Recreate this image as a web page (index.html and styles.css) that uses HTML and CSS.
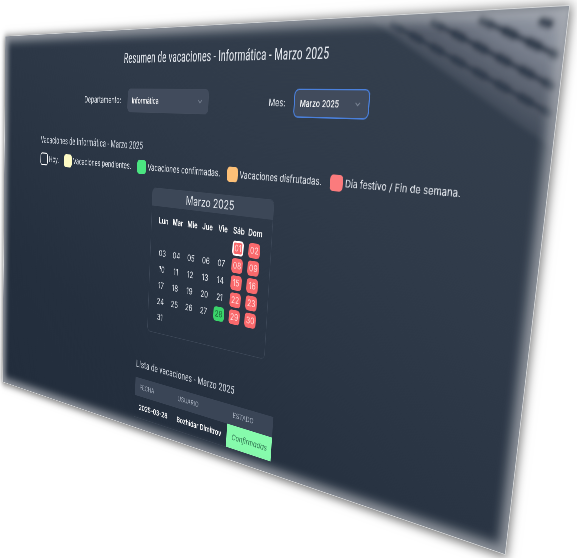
FILE: index.html
```html
<!DOCTYPE html>
<html lang="es">
<head>
<meta charset="utf-8">
<meta name="viewport" content="width=device-width, initial-scale=1">
<title>Resumen de vacaciones</title>
<link rel="stylesheet" href="styles.css">
</head>
<body>
<div class="stage">
<main class="screen" id="screen">
  <svg class="pattern" viewBox="0 0 360 180" aria-hidden="true">
    <defs>
      <linearGradient id="light" gradientUnits="userSpaceOnUse" x1="200" y1="85" x2="270" y2="-50">
        <stop offset="0" stop-color="#8a8e9c" stop-opacity="0.15"/>
        <stop offset="0.25" stop-color="#8a8e9c" stop-opacity="0.42"/>
        <stop offset="0.6" stop-color="#8f95a2" stop-opacity="0.85"/>
        <stop offset="1" stop-color="#a0a5b0" stop-opacity="1"/>
      </linearGradient>
      <filter id="soft" x="-10%" y="-10%" width="120%" height="120%"><feGaussianBlur stdDeviation="3"/></filter>
    </defs>
    <g filter="url(#soft)">
      <path d="M60 4 H360 V168 Z" fill="url(#light)"/>
      <g fill="none" stroke="#333e4d" stroke-width="13" stroke-linecap="round" stroke-dasharray="16 22">
        <path d="M166 12 L350 94"/>
        <path d="M240 12 L350 57"/>
        <path d="M100 12 L350 126"/>
        <path d="M326 17 L336 20"/>
      </g>
      <g fill="none" stroke="#333e4d" stroke-width="8">
        <path d="M166 12 L350 94"/>
        <path d="M240 12 L350 57"/>
        <path d="M100 12 L350 126"/>
      </g>
    </g>
  </svg>

  <h1 class="title">Resumen de vacaciones - Informática - Marzo 2025</h1>

  <form class="filters">
    <div class="field">
      <label for="dep">Departamento:</label>
      <span class="picker picker-wide">
        <select id="dep"><option>Informática</option></select>
        <svg viewBox="0 0 20 20" aria-hidden="true"><path d="M6 8l4 4 4-4"/></svg>
      </span>
    </div>
    <div class="field">
      <label for="mes">Mes:</label>
      <span class="picker picker-active">
        <select id="mes"><option>Marzo 2025</option></select>
        <svg viewBox="0 0 20 20" aria-hidden="true"><path d="M6 8l4 4 4-4"/></svg>
      </span>
    </div>
  </form>

  <section class="summary">
    <h2 class="heading">Vacaciones de Informática - Marzo 2025</h2>
    <ul class="legend">
      <li><i class="swatch today"></i>Hoy.</li>
      <li><i class="swatch pending"></i>Vacaciones pendientes.</li>
      <li><i class="swatch confirmed"></i>Vacaciones confirmadas.</li>
      <li><i class="swatch enjoyed"></i>Vacaciones disfrutadas.</li>
      <li><i class="swatch holiday"></i>Día festivo / Fin de semana.</li>
    </ul>
  </section>

  <section class="calendar">
    <h3>Marzo 2025</h3>
    <table class="days">
      <thead><tr><th>Lun</th><th>Mar</th><th>Mie</th><th>Jue</th><th>Vie</th><th>Sáb</th><th>Dom</th></tr></thead>
      <tbody>
        <tr><td></td><td></td><td></td><td></td><td></td><td><span class="off now">01</span></td><td><span class="off">02</span></td></tr>
        <tr><td>03</td><td>04</td><td>05</td><td>06</td><td>07</td><td><span class="off">08</span></td><td><span class="off">09</span></td></tr>
        <tr><td>10</td><td>11</td><td>12</td><td>13</td><td>14</td><td><span class="off">15</span></td><td><span class="off">16</span></td></tr>
        <tr><td>17</td><td>18</td><td>19</td><td>20</td><td>21</td><td><span class="off">22</span></td><td><span class="off">23</span></td></tr>
        <tr><td>24</td><td>25</td><td>26</td><td>27</td><td><span class="ok">28</span></td><td><span class="off">29</span></td><td><span class="off">30</span></td></tr>
        <tr><td>31</td><td></td><td></td><td></td><td></td><td></td><td></td></tr>
      </tbody>
    </table>
  </section>

  <section class="list">
    <h2 class="heading">Lista de vacaciones - Marzo 2025</h2>
    <table class="records">
      <thead><tr><th>Fecha</th><th>Usuario</th><th>Estado</th></tr></thead>
      <tbody><tr><td>2025-03-28</td><td>Bozhidar Dimitrov</td><td class="state">Confirmadas</td></tr></tbody>
    </table>
  </section>
</main>
</div>
<script src="tilt.js"></script>
</body>
</html>
```
FILE: styles.css
```css
* { box-sizing: border-box; }

html, body {
  margin: 0;
  height: 100%;
  background: #fff;
}

.stage { height: 100%; overflow: clip; }

.screen {
  position: relative;
  width: 1200px;
  min-height: 700px;
  padding: 33px 125px 0;
  transform-origin: 0 0;
  color: #e4e8ee;
  background: linear-gradient(205deg, #36414f 0%, #2f3a49 35%, #242f3e 75%, #222d3c 100%);
  box-shadow: 0 2px 14px 2px rgba(0, 0, 0, 0.55);
  font: 15px/24px Inter, "Liberation Sans", sans-serif;
}

/* soft bright rim along the edge of the screen */
.screen::after {
  content: "";
  position: absolute;
  inset: 0;
  border: 1px solid #d4d6d8;
  box-shadow: inset 0 0 16px 10px rgba(170, 174, 180, 0.8);
  pointer-events: none;
}

.pattern {
  position: absolute;
  top: 0;
  right: 0;
  width: 30%;
}

h1, h2, h3 { margin: 0; font-weight: 400; }

.title, .heading { font-family: "Roboto Condensed", "Liberation Sans Narrow", Roboto, sans-serif; }

.title {
  font-size: 23px;
  line-height: 32px;
  text-align: center;
}

.filters {
  display: flex;
  justify-content: center;
  gap: 132px;
  margin-top: 34px;
  padding-right: 30px;
}

.field { display: flex; align-items: center; gap: 18px; }

.picker { position: relative; display: flex; width: 140px; }
.picker-wide { width: 204px; }

.picker select {
  appearance: none;
  width: 100%;
  height: 40px;
  padding: 0 10px;
  border: 1px solid #434d5d;
  border-radius: 8px;
  background: #414b5c;
  color: #fff;
  font: inherit;
  font-size: 13px;
  font-weight: 500;
}

.picker-active select {
  border-color: #4a80dc;
  box-shadow: 0 0 0 1px #4a80dc;
}

.picker svg {
  position: absolute;
  right: 10px;
  top: 10px;
  width: 20px;
  fill: none;
  stroke: #7d8797;
  stroke-width: 1.5;
}

.summary { margin-top: 44px; }
.heading { font-size: 19px; line-height: 24px; color: #cdd3dc; }

.legend {
  display: flex;
  gap: 16px;
  margin: 12px 0 0;
  padding: 0;
  list-style: none;
  white-space: nowrap;
}
.legend li { display: flex; gap: 4px; }

.swatch { width: 24px; height: 24px; border-radius: 6px; }
.today { border: 2px solid #fff; }
.pending { background: #fefbc5; }
.confirmed { background: #4be581; }
.enjoyed { background: #fdc077; }
.holiday { background: #fb7b7d; }

.calendar {
  width: 286px;
  margin: 21px auto 0;
  border: 1px solid #3d4858;
  border-radius: 8px;
  overflow: hidden;
}
.calendar h3 {
  background: #3c4757;
  font-size: 20px;
  line-height: 30px;
  text-align: center;
}

.days {
  width: 254px;
  margin: 10px 17px 14px 13px;
  border-collapse: collapse;
  table-layout: fixed;
  text-align: center;
}
.days th, .days td { height: 28px; padding: 0; }
.days th { font-size: 14px; font-weight: 600; color: #fff; }
.days span { display: block; width: 25px; margin: 0 auto; border-radius: 6px; }
.off { background: #f9696c; color: #ffd9d9; }
.ok { background: #3ad46b; color: #1d6e3c; }
.now { box-shadow: inset 0 0 0 3px #fff; }

.list { width: 340px; margin: 52px auto 0; }
.records {
  width: 100%;
  margin-top: 13px;
  border-collapse: collapse;
  table-layout: fixed;
  font-size: 13px;
  line-height: 20px;
  white-space: nowrap;
}
.records th {
  padding: 7px 12px;
  background: #3a4556;
  color: #a3acba;
  font-size: 12px;
  font-weight: 400;
  text-align: left;
  text-transform: uppercase;
}
.records th:nth-child(1) { width: 30%; }
.records th:nth-child(2) { width: 40%; }
.records td {
  padding: 10px 12px;
  border-bottom: 1px solid #303b4a;
  color: #fff;
  font-weight: 600;
}
.records .state { background: #86fbac; color: #2f7350; font-weight: 400; font-style: italic; }
```
FILE: tilt.js
```javascript
// Projects the screen onto four corners given as fractions of the window.
const corners = [[0.009, 0.0645], [0.988, 0.009], [0.876, 0.9946], [0.0042, 0.6846]];

function tilt() {
  const el = document.getElementById("screen");
  const w = el.offsetWidth, h = el.offsetHeight;
  const [p0, p1, p2, p3] = corners.map(([x, y]) => [x * innerWidth, y * innerHeight]);
  const dx1 = p1[0] - p2[0], dx2 = p3[0] - p2[0], sx = p0[0] - p1[0] + p2[0] - p3[0];
  const dy1 = p1[1] - p2[1], dy2 = p3[1] - p2[1], sy = p0[1] - p1[1] + p2[1] - p3[1];
  const den = dx1 * dy2 - dx2 * dy1;
  const g = (sx * dy2 - dx2 * sy) / den;
  const k = (dx1 * sy - sx * dy1) / den;
  const m = [
    (p1[0] - p0[0] + g * p1[0]) / w, (p1[1] - p0[1] + g * p1[1]) / w, 0, g / w,
    (p3[0] - p0[0] + k * p3[0]) / h, (p3[1] - p0[1] + k * p3[1]) / h, 0, k / h,
    0, 0, 1, 0,
    p0[0], p0[1], 0, 1
  ];
  el.style.transform = "matrix3d(" + m.map(v => v.toFixed(9)).join(",") + ")";
}

addEventListener("resize", tilt);
tilt();
```
